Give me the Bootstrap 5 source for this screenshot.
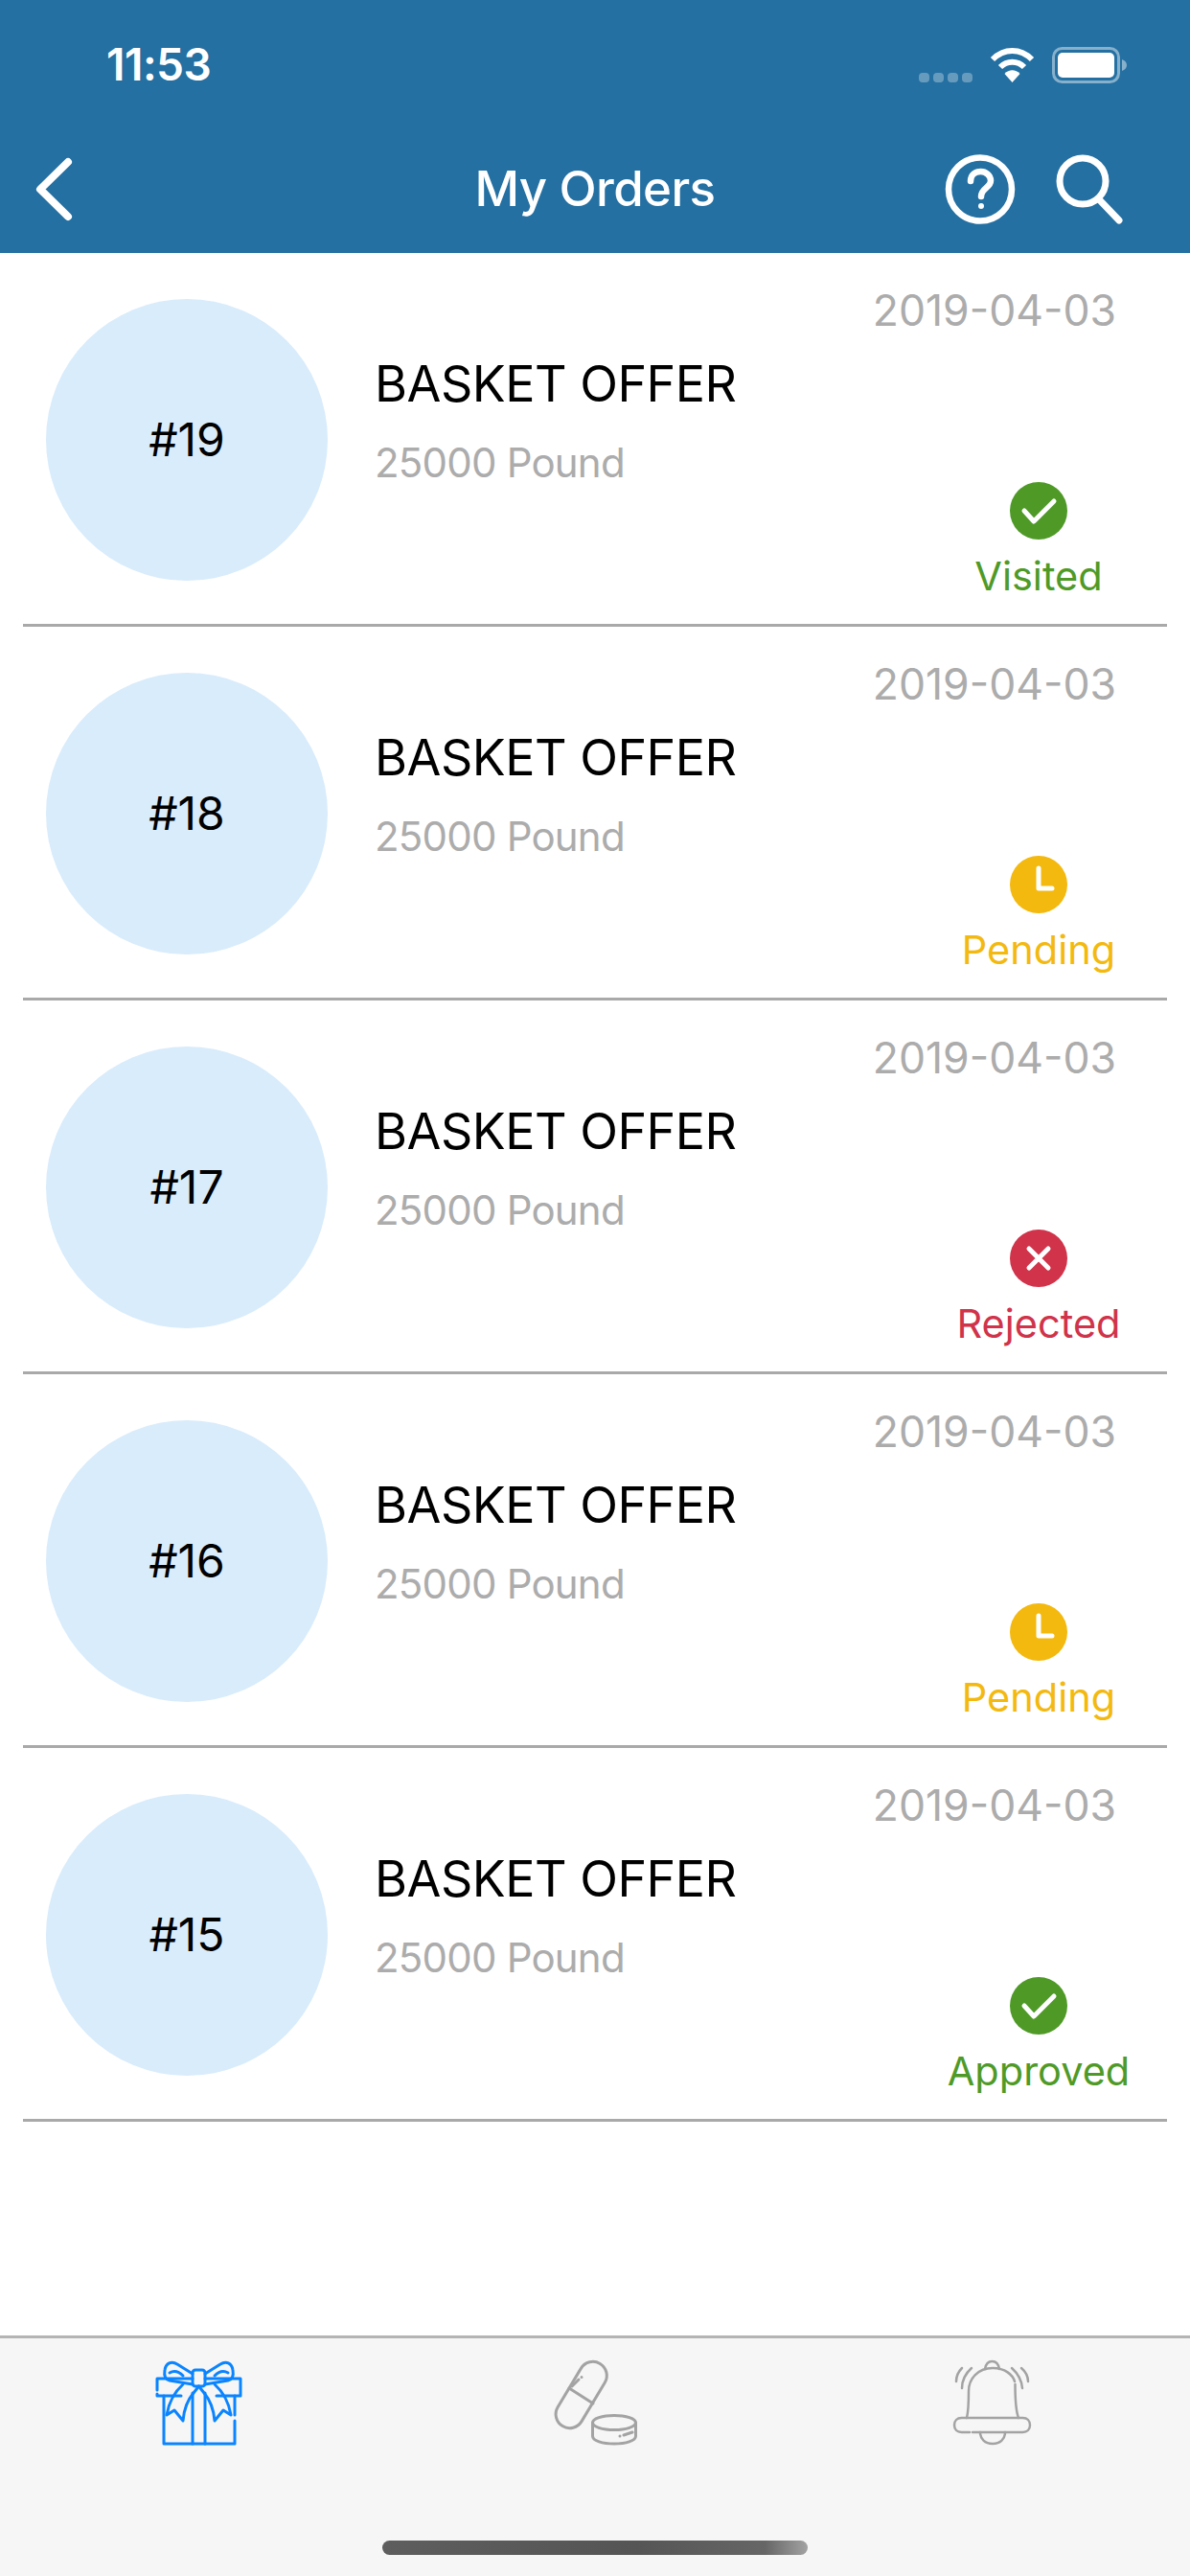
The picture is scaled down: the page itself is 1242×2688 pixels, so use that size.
<!DOCTYPE html>
<html lang="en">
<head>
    <meta charset="UTF-8">
    <meta name="viewport" content="width=device-width, initial-scale=1.0">
    <title>My Orders</title>
    <link rel="stylesheet" href="https://cdn.jsdelivr.net/npm/bootstrap@5.3.0/dist/css/bootstrap.min.css">
    <style>
        body { font-family: Inter, "Liberation Sans", sans-serif; background: #fff; color: #000; }
        svg { display: block; overflow: visible; }
        .app-shell { height: 2688px; }

        .top-head { background: #2470a2; color: #fff; height: 264px; }
        .status-strip { height: 134px; padding: 46px 66px 0 111px; }
        .clock-text { font-size: 46px; line-height: 42px; font-weight: 600; letter-spacing: -0.5px; }
        .status-icons { gap: 18px; margin-top: 3px; }
        .signal-dots { gap: 4px; margin-top: 27px; }
        .signal-dots span { width: 11px; height: 10px; border-radius: 4px; background: rgba(255,255,255,.3); }
        .nav-strip { height: 130px; padding: 0 71px 4px 38px; }
        .nav-title { font-size: 51px; line-height: 60px; font-weight: 500; letter-spacing: -0.6px; }
        .nav-tools { gap: 44px; }

        .order-row { height: 390px; margin: 0 24px; padding-left: 24px; border-bottom: 3px solid #a9a9a9; }
        .num-circle { width: 294px; height: 294px; border-radius: 50%; background: #d9ecfb; margin-top: 48px; font-size: 48px; }
        .order-info { margin-left: 49px; padding-top: 107px; }
        .order-title { font-size: 52px; line-height: 60px; letter-spacing: -0.5px; }
        .order-price { font-size: 42px; line-height: 60px; color: #acacac; margin-top: 22px; letter-spacing: -0.8px; }
        .order-side { width: 340px; padding-top: 30px; }
        .order-date { font-size: 44.5px; line-height: 60px; color: #acacac; padding-right: 53px; text-align: right; white-space: nowrap; }
        .order-state { width: 200px; margin-top: 149px; margin-right: 34px; align-self: flex-end; font-size: 41.5px; line-height: 52px; text-align: center; white-space: nowrap; }
        .state-dot { width: 60px; height: 60px; margin: 0 auto 12px; }
        .is-green { color: #4f9a27; }
        .is-yellow { color: #f3b90f; }
        .is-red { color: #d0334a; }

        .tab-strip { height: 251px; background: #f6f6f6; border-top: 3px solid #b4b4b4; }
        .tab-cell { padding-top: 24px; }
        .home-bar { left: 399px; top: 211px; width: 444px; height: 15px; border-radius: 8px; background: linear-gradient(90deg, #5e5e5e 0%, #555 60%, #666 90%, #a3a3a3 100%); }
    </style>
</head>
<body>
    <div class="app-shell d-flex flex-column">
        <!-- Header -->
        <div class="top-head">
            <div class="status-strip d-flex justify-content-between align-items-start">
                <div class="clock-text">11:53</div>
                <div class="status-icons d-flex align-items-start">
                    <div class="signal-dots d-flex"><span></span><span></span><span></span><span></span></div>
                    <svg width="47" height="37" viewBox="0 0 47 37" fill="none" stroke="#fff" stroke-width="6">
                        <path d="M3 13C15 1 32 1 44 13"/>
                        <path d="M11 21C18 14 29 14 36 21"/>
                        <path d="M23.500 37L15.500 28C20 23 27 23 31.500 28Z" fill="#fff" stroke="none"/>
                    </svg>
                    <svg width="78" height="38" viewBox="0 0 78 38">
                        <rect x="1.500" y="1.500" width="68" height="35" rx="9" fill="none" stroke="#fff" stroke-opacity=".45" stroke-width="3"/>
                        <rect x="6" y="6" width="59" height="26" rx="5" fill="#fff"/>
                        <path d="M73 13C76 14 78 16 78 19S76 24 73 25Z" fill="#fff" fill-opacity=".45"/>
                    </svg>
                </div>
            </div>
            <div class="nav-strip d-flex align-items-center position-relative">
                <svg width="37" height="65" viewBox="0 0 37 65" fill="none" stroke="#fff" stroke-width="8" stroke-linecap="round" stroke-linejoin="round">
                    <path d="M33 4L4 32.500L33 61"/>
                </svg>
                <div class="nav-title position-absolute start-50 translate-middle-x">My Orders</div>
                <div class="nav-tools d-flex align-items-center ms-auto">
                    <svg width="72" height="73" viewBox="0 0 72 73" fill="none" stroke="#fff" stroke-width="6.500" stroke-linecap="round">
                        <circle cx="36" cy="36.500" r="33"/>
                        <path d="M26 28C26 21 31 18 36.500 18C42 18 47 22 47 27.500C47 35 37 35 37 44"/>
                        <circle cx="37" cy="54" r="2" fill="#fff" stroke-width="2"/>
                    </svg>
                    <svg width="68" height="71" viewBox="0 0 68 71" fill="none" stroke="#fff" stroke-width="7" stroke-linecap="round">
                        <circle cx="27" cy="27" r="24"/>
                        <path d="M44 46L65 68"/>
                    </svg>
                </div>
            </div>
        </div>

        <!-- Orders -->
        <div id="orderList" class="flex-grow-1"></div>

        <!-- Tabs -->
        <div class="tab-strip row g-0 position-relative">
            <div class="col-4 tab-cell d-flex justify-content-center">
                <svg width="87" height="86" viewBox="0 0 87 86" fill="none" stroke="#0a84ff" stroke-width="3" stroke-linejoin="round" stroke-linecap="round">
                    <path d="M0 30V18H37M50 18H87V36H62M25 36H0V34"/>
                    <path d="M7 36V86H81V62M81 56V36"/>
                    <path d="M37 33V86M50 33V86"/>
                    <rect x="37" y="9" width="13" height="17" rx="3"/>
                    <path d="M37 13L21 3C15 -1 9 2 8 9C7 15 9 19 13 20L37 24"/>
                    <path d="M50 13L66 3C72 -1 78 2 79 9C80 15 78 19 74 20L50 24"/>
                    <path d="M13 12C18 9 23 11 27 15M74 12C69 9 64 11 60 15"/>
                    <path d="M27 24C18 32 12 44 10 56L18 51L27 62C28 50 32 40 38 33L43.500 26"/>
                    <path d="M60 24C69 32 75 44 77 56L69 51L60 62C59 50 55 40 49 33L43.500 26"/>
                </svg>
            </div>
            <div class="col-4 tab-cell d-flex justify-content-center">
                <svg width="85" height="86" viewBox="18 24 85 86" fill="none" stroke="#a3a3a3" stroke-width="3" stroke-linecap="round" stroke-linejoin="round">
                    <rect x="-14.500" y="-38" width="29" height="76" rx="14.500" transform="translate(45.700 59) rotate(31)"/>
                    <path d="M33 52L58 68"/>
                    <path d="M36 50L43 43M46 40.500V40.400"/>
                    <ellipse cx="80" cy="88" rx="22.500" ry="7.500"/>
                    <path d="M57.500 88V102C57.500 107 68 110 80 110S102.500 107 102.500 102V88"/>
                    <path d="M86 102V101.900M90 101L99 98"/>
                </svg>
            </div>
            <div class="col-4 tab-cell d-flex justify-content-center">
                <svg width="79" height="86" viewBox="15 24 79 86" fill="none" stroke="#a3a3a3" stroke-width="2.500" stroke-linecap="round" stroke-linejoin="round">
                    <path d="M47 32C48 26 51 24 54.500 24S61 26 62 32"/>
                    <path d="M28 83C30 75 30 65 30 55C30 42 40 31 55 31C68 31 76 38 78 45M78.500 48C78.500 60 79 75 82 83"/>
                    <path d="M31 98H22.500C18 98 15 95 15 90.500S18 83 22.500 83H86.500C91 83 94 86 94 90.500S91 98 86.500 98H34"/>
                    <path d="M42 98C42 105 47 110 55 110S68 105 68 98"/>
                    <path d="M33 31Q23 40 23 52M23 31Q17 37 17 45"/>
                    <path d="M75 31Q85 40 86 52M85 31Q92 37 92 45"/>
                </svg>
            </div>
            <div class="home-bar position-absolute"></div>
        </div>
    </div>

    <script src="https://cdn.jsdelivr.net/npm/bootstrap@5.3.0/dist/js/bootstrap.bundle.min.js"></script>
    <script>
        const checkIcon = `<svg class="state-dot" viewBox="0 0 60 60"><circle cx="30" cy="30" r="30" fill="#4f9a27"/><path d="M15 30L25 41L46 20" fill="none" stroke="#fff" stroke-width="5" stroke-linecap="round" stroke-linejoin="round"/></svg>`;
        const clockIcon = `<svg class="state-dot" viewBox="0 0 60 60"><circle cx="30" cy="30" r="30" fill="#f3b90f"/><path d="M30 13V34H44" fill="none" stroke="#fff" stroke-width="5" stroke-linecap="round" stroke-linejoin="round"/></svg>`;
        const crossIcon = `<svg class="state-dot" viewBox="0 0 60 60"><circle cx="30" cy="30" r="30" fill="#d0334a"/><path d="M20 20L40 40M40 20L20 40" fill="none" stroke="#fff" stroke-width="5" stroke-linecap="round"/></svg>`;

        const orders = [
            { num: 19, state: "Visited", tone: "is-green", icon: checkIcon },
            { num: 18, state: "Pending", tone: "is-yellow", icon: clockIcon },
            { num: 17, state: "Rejected", tone: "is-red", icon: crossIcon },
            { num: 16, state: "Pending", tone: "is-yellow", icon: clockIcon },
            { num: 15, state: "Approved", tone: "is-green", icon: checkIcon }
        ];

        document.getElementById("orderList").innerHTML = orders.map(o => `
            <div class="order-row d-flex">
                <div class="num-circle d-flex align-items-center justify-content-center flex-shrink-0">#${o.num}</div>
                <div class="order-info flex-grow-1">
                    <div class="order-title">BASKET OFFER</div>
                    <div class="order-price">25000 Pound</div>
                </div>
                <div class="order-side d-flex flex-column">
                    <div class="order-date">2019-04-03</div>
                    <div class="order-state ${o.tone}">${o.icon}<div>${o.state}</div></div>
                </div>
            </div>`).join("");
    </script>
</body>
</html>
